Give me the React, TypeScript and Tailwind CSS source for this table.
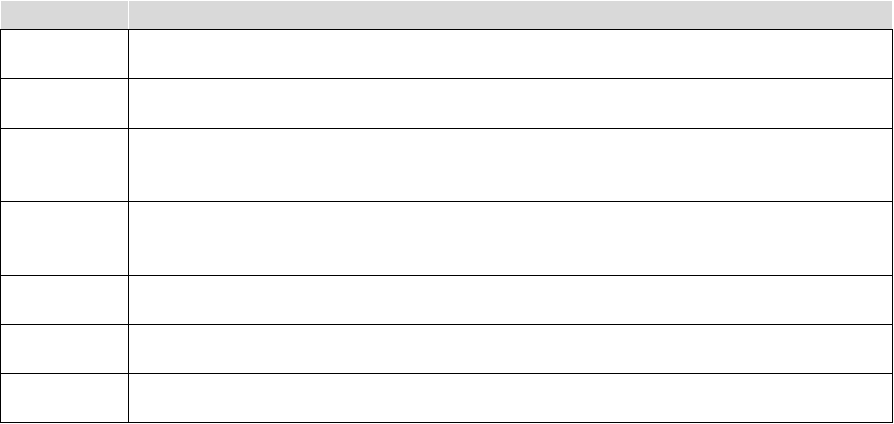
import React from 'react';

const rowHeights = ['h-[49px]', 'h-[50px]', 'h-[73px]', 'h-[74px]', 'h-[49px]', 'h-[49px]', 'h-[49px]'];

const App: React.FC = () => {
  return (
    <div className="w-[894px] h-[424px] bg-white" style={{ fontFamily: '"Liberation Sans", Arial, sans-serif' }}>
      <div className="w-[893px]">
        <div className="flex h-[29px]">
          <div className="w-[129px] bg-[#d9d9d9] border-l border-t border-r border-white" />
          <div className="flex-1 bg-[#d9d9d9] border-t border-r border-white" />
        </div>
        <div className="border-x border-b border-black">
          {rowHeights.map((h, i) => (
            <div key={i} className={`flex border-t border-black ${h}`}>
              <div className="w-[128px] border-r border-black" />
              <div className="flex-1" />
            </div>
          ))}
        </div>
      </div>
    </div>
  );
};

export default App;
